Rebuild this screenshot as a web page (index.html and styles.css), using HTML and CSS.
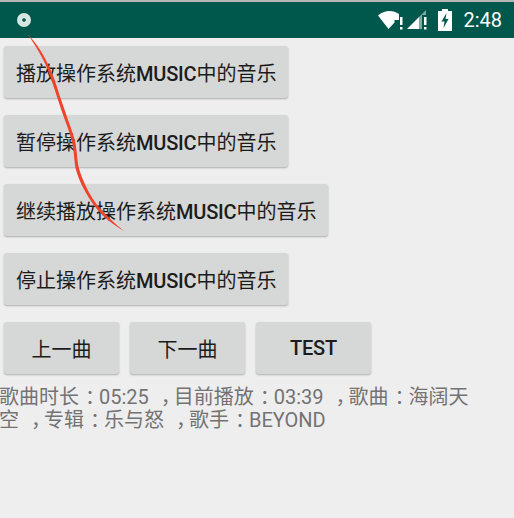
FILE: index.html
```html
<!DOCTYPE html>
<html lang="zh-Hans">
<head>
    <meta charset="UTF-8">
    <meta name="viewport" content="width=device-width, initial-scale=1.0">
    <title>音乐</title>
    <link rel="stylesheet" href="styles.css">
</head>
<body>

<!-- 状态栏 -->
<div class="status-bar">
    <span class="notify-dot"></span>
    <div class="status-icons">
        <svg class="icon-wifi" width="26" height="20" viewBox="0 0 26 20">
            <path d="M0 5.500C3 2.500 7.500 1 11.500 1C15 1 18 2 21 4L21 10L16.500 10L16.500 12.500L10.500 19Z" fill="#fff"/>
            <rect x="22" y="7" width="2.500" height="8" fill="#fff"/>
            <rect x="22" y="17" width="2.500" height="2.500" fill="#fff"/>
        </svg>
        <svg class="icon-signal" width="22" height="20" viewBox="0 0 22 20">
            <path d="M0 19L12 7L12 19Z" fill="#fff"/>
            <path d="M12 7L19 0L19 5L15 5L15 19L12 19Z" fill="#7fa9a3"/>
            <rect x="17" y="7" width="2.500" height="8" fill="#fff"/>
            <rect x="17" y="17" width="2.500" height="2.500" fill="#fff"/>
        </svg>
        <svg class="icon-battery" width="14" height="22" viewBox="0 0 14 22">
            <path fill-rule="evenodd" d="M4 2L4 0L10 0L10 2L14 2L14 22L0 22L0 2ZM8.500 4L3.500 12.500L6.500 12.500L5.500 19L10.500 10L7.500 10Z" fill="#fff"/>
        </svg>
        <span class="clock">2:48</span>
    </div>
</div>

<!-- 按钮区 -->
<div class="content">
    <button class="btn">播放操作系统<b class="latin">MUSIC</b>中的音乐</button>
    <button class="btn">暂停操作系统<b class="latin">MUSIC</b>中的音乐</button>
    <button class="btn">继续播放操作系统<b class="latin">MUSIC</b>中的音乐</button>
    <button class="btn">停止操作系统<b class="latin">MUSIC</b>中的音乐</button>
    <div class="btn-row">
        <button class="btn btn-small">上一曲</button>
        <button class="btn btn-small">下一曲</button>
        <button class="btn btn-small"><b class="latin">TEST</b></button>
    </div>
    <p class="song-info">歌曲时长<span class="colon">：</span>05:25 <span class="comma">，</span>目前播放<span class="colon">：</span>03:39 <span class="comma">，</span>歌曲<span class="colon">：</span>海阔天<br>空 <span class="comma">，</span>专辑<span class="colon">：</span>乐与怒 <span class="comma">，</span>歌手<span class="colon">：</span>BEYOND</p>
</div>

<!-- 截图上的红色笔迹 -->
<svg class="scribble" width="514" height="518" viewBox="0 0 514 518">
    <path d="M28 34.500C35 42 40 49 44 56.500C48 64 52 72 54.500 79.500C58 90 61 100 64.500 109.500C68 121 73 132 75.500 143C77 152 77 158 78.500 166.500C82 180 90 196 98 206C106 215 115 224 124 231C114 225 104 218 96 208C87 196 79 182 75.500 168C74 158 74 152 72.500 144C70 132 65 121 61.500 110.500C58 100 55 90 51.500 80.500C49 72 46 65 42 57.500C38 50 33 42 28 34.500Z" fill="#f0442a"/>
</svg>

</body>
</html>
```

FILE: styles.css
```css
body {
    margin: 0;
    background-color: #eeeeee;
    font-family: "Roboto", "Noto Sans CJK SC", sans-serif;
    overflow: hidden;
}
.status-bar {
    height: 36px;
    border-top: 2px solid #b5b5b5;
    background-color: #00574b;
    display: flex;
    align-items: center;
    justify-content: space-between;
    padding: 0 12px 0 17px;
}
.notify-dot {
    width: 14px;
    height: 14px;
    box-sizing: border-box;
    border-radius: 50%;
    background-color: #fff;
    border: 5px solid #d5e6e3;
    box-shadow: inset 0 0 0 2px #00574b;
}
.status-icons {
    display: flex;
    align-items: center;
}
.icon-wifi {
    margin-right: 3px;
}
.icon-signal {
    margin-right: 9px;
}
.icon-battery {
    margin-right: 11px;
}
.clock {
    color: #fff;
    font-size: 20px;
}
.content {
    padding: 8px 0 0 4px;
    display: flex;
    flex-direction: column;
    align-items: flex-start;
}
.btn {
    height: 52px;
    margin-bottom: 17px;
    padding: 0 12px;
    border: none;
    border-radius: 3px;
    background-color: #d6d7d7;
    box-shadow: 0 1px 2px rgba(0, 0, 0, 0.28);
    color: #1c1c1c;
    font-family: inherit;
    font-size: 20px;
    font-weight: 400;
    white-space: nowrap;
}
.latin {
    font-weight: 500;
    letter-spacing: -0.2px;
}
.btn-row {
    display: flex;
    gap: 11px;
}
.btn-small {
    width: 115px;
    margin-bottom: 0;
    padding: 0;
}
.song-info {
    margin: 12px 0 0 -5px;
    color: #737373;
    font-size: 20px;
    line-height: 23px;
    white-space: nowrap;
}
.colon {
    padding-left: 6px;
    letter-spacing: -6px;
}
.comma {
    padding-left: 7px;
    letter-spacing: -7px;
}
.scribble {
    position: absolute;
    left: 0;
    top: 0;
    pointer-events: none;
}
```
